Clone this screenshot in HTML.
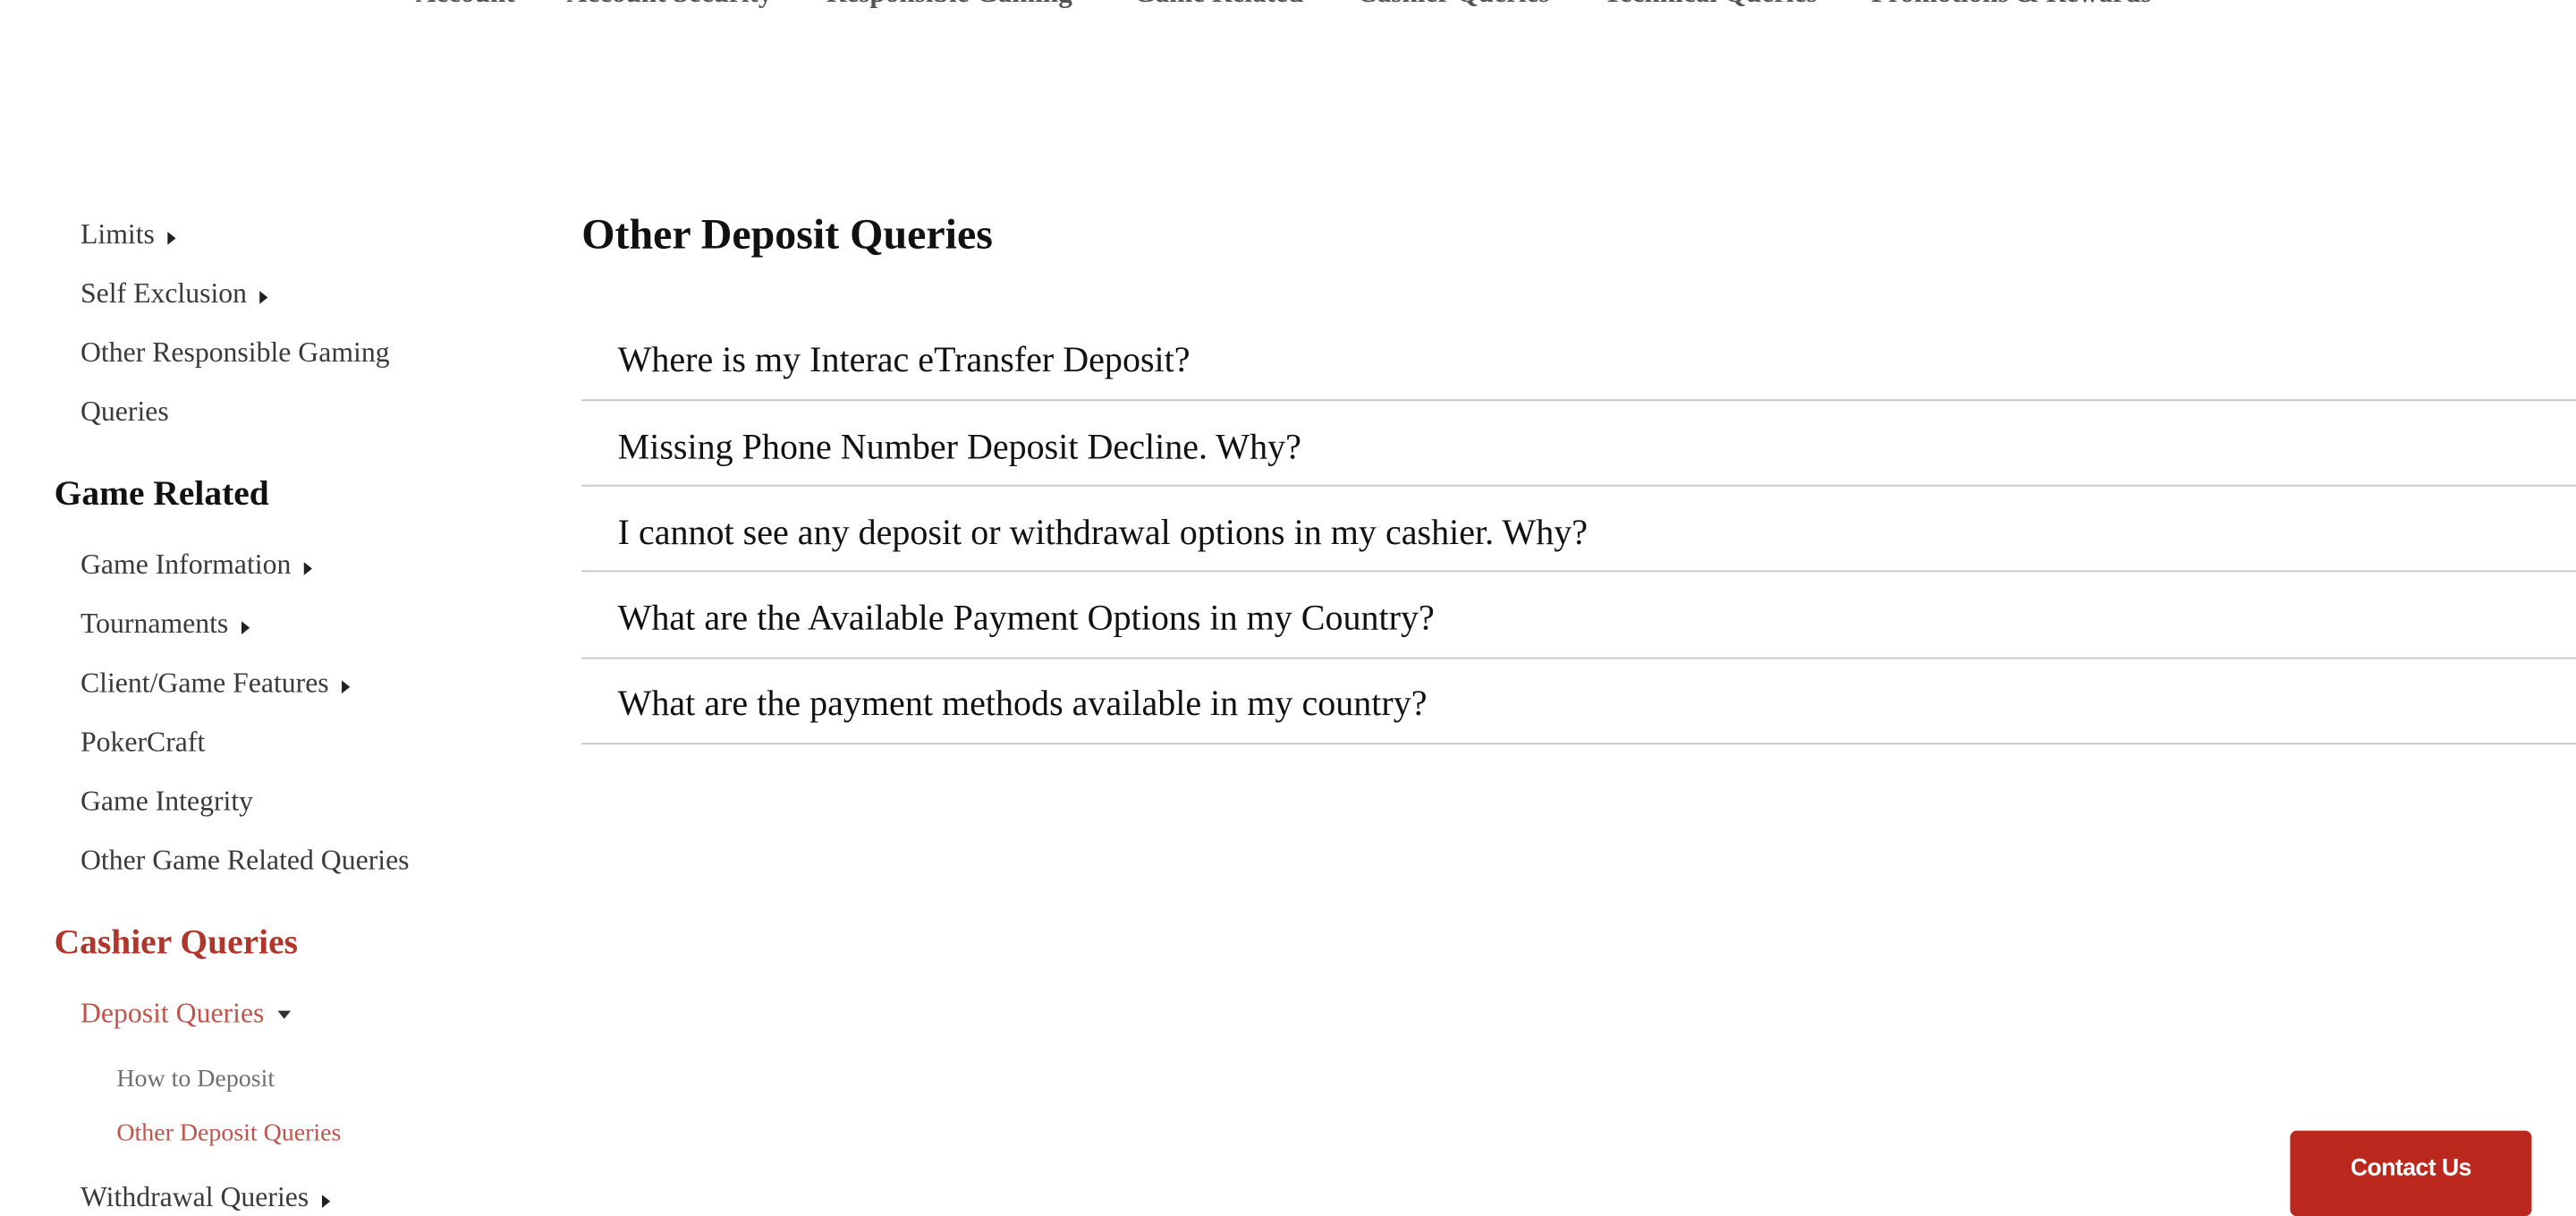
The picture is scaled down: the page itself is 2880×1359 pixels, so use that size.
<!DOCTYPE html>
<html><head><meta charset="utf-8"><style>
html,body{margin:0;padding:0;width:2880px;height:1350px;overflow:hidden;background:#fff}
#w{position:absolute;left:0;top:0;width:1568px;height:735px;transform:scale(1.836735);transform-origin:0 0;font-family:"Liberation Serif",serif;}
.a{position:absolute;white-space:nowrap;line-height:20px;transform:translateY(-9px)}
.nav{font-weight:bold;font-size:17px;color:#555;top:-5px}
.s{left:49px;font-size:17.3px;color:#3a3a3a}
.h{left:33px;font-size:21.5px;font-weight:bold;color:#111}
.ss{left:71px;font-size:15.2px;color:#6f6f6f}
.tri{display:inline-block;width:0;height:0;border-top:4.5px solid transparent;border-bottom:4.5px solid transparent;border-left:5px solid #222;margin-left:8px;vertical-align:-1px}
.dn{display:inline-block;width:0;height:0;border-left:4.5px solid transparent;border-right:4.5px solid transparent;border-top:5px solid #333;margin-left:8px;vertical-align:2px}
.q{left:376px;font-size:21.8px;color:#111}
.ln{position:absolute;left:354px;width:1214px;height:1px;background:#c6c6c6}
.btn{position:absolute;left:1394px;top:688px;width:147px;height:52px;background:#bb281e;border-radius:4px;color:#fff;font-family:"Liberation Sans",sans-serif;font-weight:bold;font-size:14.5px;text-align:center;line-height:47px;letter-spacing:-0.3px}
</style></head><body><div id="w">
<div class="a nav" style="left:253px">Account</div>
<div class="a nav" style="left:345px">Account Security</div>
<div class="a nav" style="left:503px">Responsible Gaming</div>
<div class="a nav" style="left:690px">Game Related</div>
<div class="a nav" style="left:826px">Cashier Queries</div>
<div class="a nav" style="left:976px">Technical Queries</div>
<div class="a nav" style="left:1139px">Promotions &amp; Rewards</div>

<div class="a s" style="top:142px">Limits<span class="tri"></span></div>
<div class="a s" style="top:178px">Self Exclusion<span class="tri"></span></div>
<div class="a s" style="top:214px">Other Responsible Gaming</div>
<div class="a s" style="top:250px">Queries</div>
<div class="a h" style="top:299px">Game Related</div>
<div class="a s" style="top:343px">Game Information<span class="tri"></span></div>
<div class="a s" style="top:379px">Tournaments<span class="tri"></span></div>
<div class="a s" style="top:415px">Client/Game Features<span class="tri"></span></div>
<div class="a s" style="top:451px">PokerCraft</div>
<div class="a s" style="top:487px">Game Integrity</div>
<div class="a s" style="top:523px">Other Game Related Queries</div>
<div class="a h" style="top:572px;color:#b0352b">Cashier Queries</div>
<div class="a s" style="top:616px;color:#c0554b">Deposit Queries<span class="dn"></span></div>
<div class="a ss" style="top:656px">How to Deposit</div>
<div class="a ss" style="top:689px;color:#c0554b">Other Deposit Queries</div>
<div class="a s" style="top:728px">Withdrawal Queries<span class="tri"></span></div>

<div class="a" style="left:354px;top:143px;font-size:26.1px;font-weight:bold;color:#111;line-height:26px;transform:translateY(-13px)">Other Deposit Queries</div>
<div class="a q" style="top:218px">Where is my Interac eTransfer Deposit?</div>
<div class="ln" style="top:243px"></div>
<div class="a q" style="top:271px">Missing Phone Number Deposit Decline. Why?</div>
<div class="ln" style="top:295px"></div>
<div class="a q" style="top:323px">I cannot see any deposit or withdrawal options in my cashier. Why?</div>
<div class="ln" style="top:347px"></div>
<div class="a q" style="top:375px">What are the Available Payment Options in my Country?</div>
<div class="ln" style="top:400px"></div>
<div class="a q" style="top:427px">What are the payment methods available in my country?</div>
<div class="ln" style="top:452px"></div>

<div class="btn">Contact Us</div>
</div></body></html>
